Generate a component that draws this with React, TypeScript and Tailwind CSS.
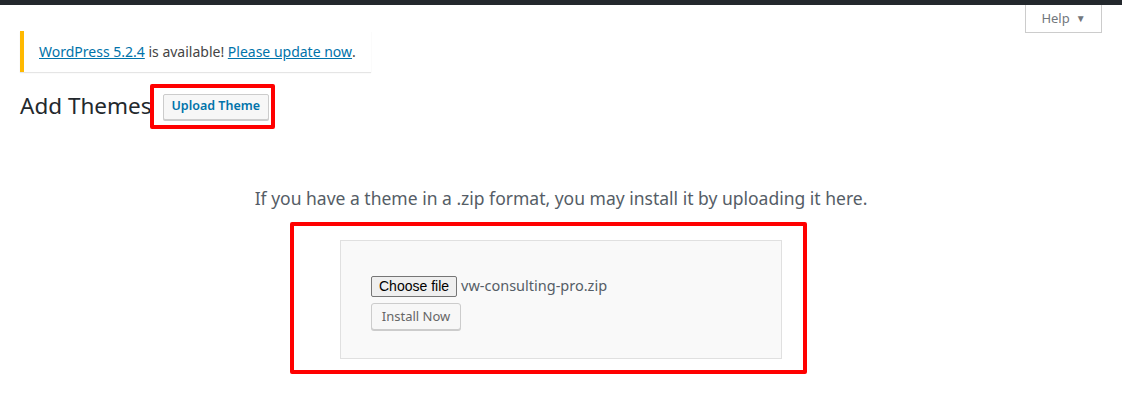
const font = "font-['Noto_Sans','Open_Sans',sans-serif]";

const App = () => {
  return (
    <div className={`relative w-[1122px] h-[415px] bg-white overflow-hidden ${font}`}>
      <div className="h-[5px] bg-[#23282d]" />

      {/* help tab */}
      <div className="absolute top-[5px] right-[20px] w-[77px] h-[28px] border border-t-0 border-[#ccc] bg-white flex items-center justify-center gap-[6px] text-[13px] text-[#72777c]">
        <span>Help</span>
        <span className="text-[10px]">▼</span>
      </div>

      <div className="px-[20px]">
        <div className="mt-[26px] w-[351px] h-[41px] border-l-4 border-[#ffb900] bg-white shadow-[0_1px_1px_rgba(0,0,0,0.1)] flex items-center pl-[15px] text-[14px] text-[#444]">
          <a className="text-[#0073aa] underline">WordPress 5.2.4</a>
          <span>&nbsp;is available!&nbsp;</span>
          <a className="text-[#0073aa] underline">Please update now</a>
          <span>.</span>
        </div>

        <div className="flex items-center mt-[21px] h-[26px]">
          <h1 className="text-[22.5px] text-[#23282d] leading-none">Add Themes</h1>
          <div className="relative ml-[11px]">
            <button className="h-[26px] px-[8px] border border-[#ccc] rounded-[2px] bg-[#f7f7f7] text-[12.5px] font-semibold text-[#0073aa] shadow-[0_1px_0_#ccc]">
              Upload Theme
            </button>
            <div className="absolute -left-[13px] -right-[6px] -top-[8px] -bottom-[9px] border-4 border-[#ff0000] rounded-[2px]" />
          </div>
        </div>
      </div>

      <p className="mt-[66px] text-center text-[17.5px] text-[#555d66]">
        If you have a theme in a .zip format, you may install it by uploading it here.
      </p>

      <div className="relative mx-auto mt-[29px] w-[442px] h-[119px] bg-[#f9f9f9] border border-[#e0e0e0] pl-[30px] pt-[34px]">
        <div className="flex items-center gap-[4px]">
          <button className="h-[21px] px-[7px] bg-[#efefef] border border-[#767676] rounded-[2px] text-[14px] text-black font-['Liberation_Sans',Arial,sans-serif] leading-none">
            Choose file
          </button>
          <span className="text-[14.5px] text-[#555d66]">vw-consulting-pro.zip</span>
        </div>
        <button className="mt-[6px] h-[27px] w-[90px] border border-[#ccc] rounded-[3px] bg-[#f7f7f7] text-[13px] text-[#666] shadow-[0_1px_0_#ccc]">
          Install Now
        </button>
        <div className="absolute -left-[51px] -right-[26px] -top-[19px] -bottom-[16px] border-4 border-[#ff0000] rounded-[2px]" />
      </div>
    </div>
  );
};

export default App;
